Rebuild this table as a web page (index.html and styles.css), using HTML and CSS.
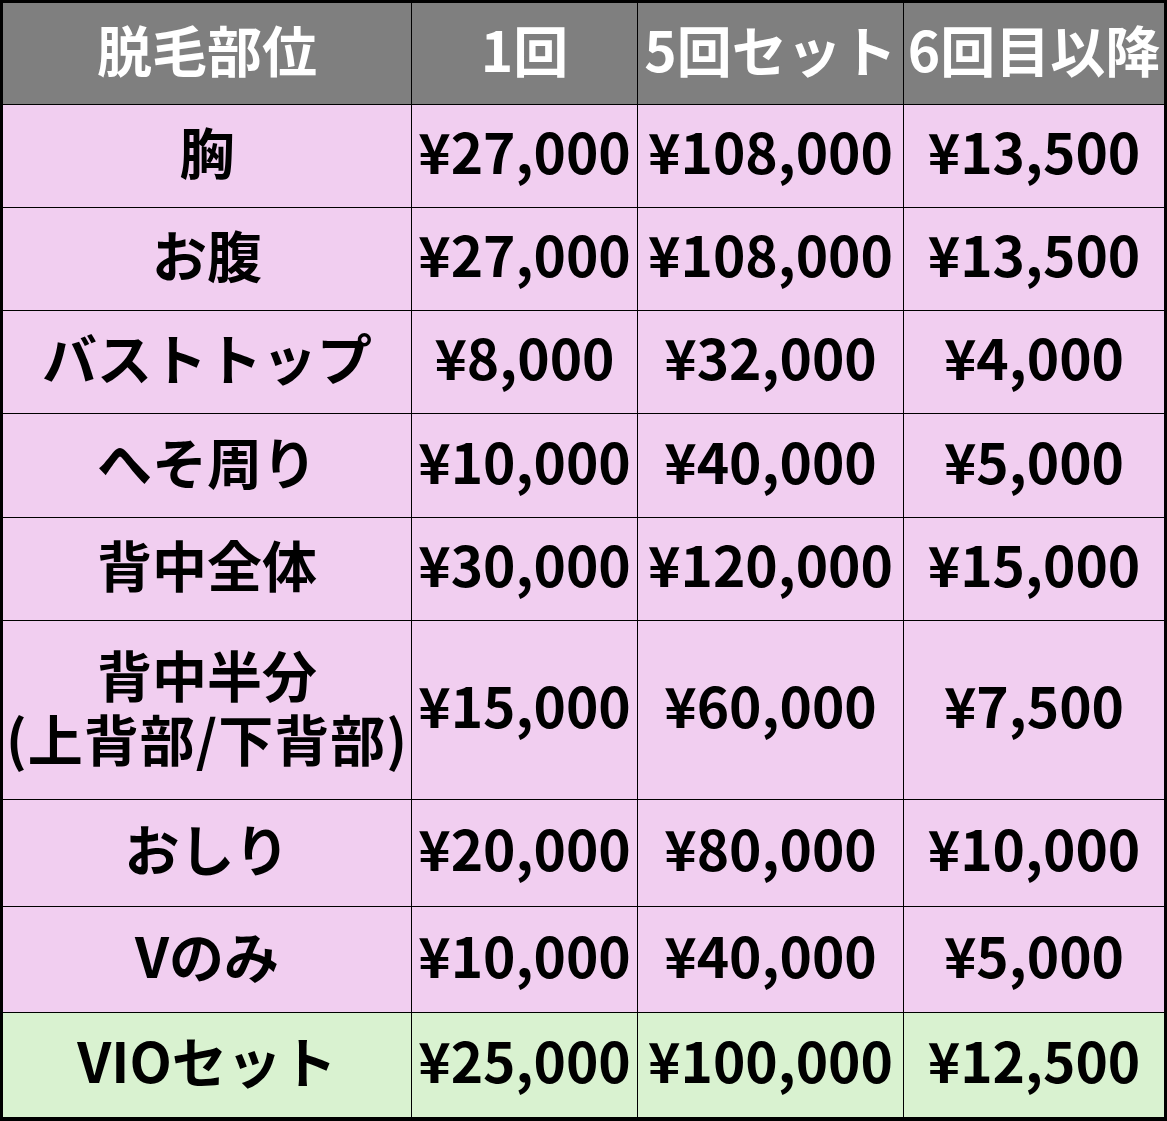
FILE: index.html
```html
<!DOCTYPE html>
<html lang="ja">
<head>
<meta charset="utf-8">
<title>脱毛料金表</title>
<link rel="stylesheet" href="styles.css">
</head>
<body>
<div class="table">
  <div class="cell head">脱毛部位</div>
  <div class="cell head">1回</div>
  <div class="cell head">5回セット</div>
  <div class="cell head">6回目以降</div>

  <div class="cell">胸</div>
  <div class="cell">¥27,000</div>
  <div class="cell">¥108,000</div>
  <div class="cell">¥13,500</div>

  <div class="cell">お腹</div>
  <div class="cell">¥27,000</div>
  <div class="cell">¥108,000</div>
  <div class="cell">¥13,500</div>

  <div class="cell">バストトップ</div>
  <div class="cell">¥8,000</div>
  <div class="cell">¥32,000</div>
  <div class="cell">¥4,000</div>

  <div class="cell">へそ周り</div>
  <div class="cell">¥10,000</div>
  <div class="cell">¥40,000</div>
  <div class="cell">¥5,000</div>

  <div class="cell">背中全体</div>
  <div class="cell">¥30,000</div>
  <div class="cell">¥120,000</div>
  <div class="cell">¥15,000</div>

  <div class="cell two"><span class="line">背中半分</span><span class="line wide">(上背部/下背部)</span></div>
  <div class="cell">¥15,000</div>
  <div class="cell">¥60,000</div>
  <div class="cell">¥7,500</div>

  <div class="cell">おしり</div>
  <div class="cell">¥20,000</div>
  <div class="cell">¥80,000</div>
  <div class="cell">¥10,000</div>

  <div class="cell">Vのみ</div>
  <div class="cell">¥10,000</div>
  <div class="cell">¥40,000</div>
  <div class="cell">¥5,000</div>

  <div class="cell green">VIOセット</div>
  <div class="cell green">¥25,000</div>
  <div class="cell green">¥100,000</div>
  <div class="cell green">¥12,500</div>
</div>
</body>
</html>
```
FILE: styles.css
```css
html, body {
  margin: 0;
  padding: 0;
  background: #000;
}
.table {
  width: 1167px;
  height: 1121px;
  box-sizing: border-box;
  padding: 3px 3px 4px 3px;
  background: #000;
  display: grid;
  grid-template-columns: 408px 225px 265px 260px;
  grid-template-rows: 101px 102px 102px 102px 103px 102px 178px 106px 105px 104px;
  gap: 1px;
  font-family: "Noto Sans CJK JP", "Noto Sans", sans-serif;
  font-weight: 700;
}
.cell {
  background: #f1cef0;
  color: #000;
  display: flex;
  align-items: center;
  justify-content: center;
  text-align: center;
  font-size: 55px;
  line-height: 1.15;
  white-space: nowrap;
  box-sizing: border-box;
  padding-bottom: 10px;
}
.head {
  background: #7f7f7f;
  color: #fff;
}
.green {
  background: #d9f2d0;
}
.two {
  flex-direction: column;
  gap: 4px;
  line-height: 1.1;
}
.line {
  display: block;
}
.wide {
  letter-spacing: 1px;
}
```
